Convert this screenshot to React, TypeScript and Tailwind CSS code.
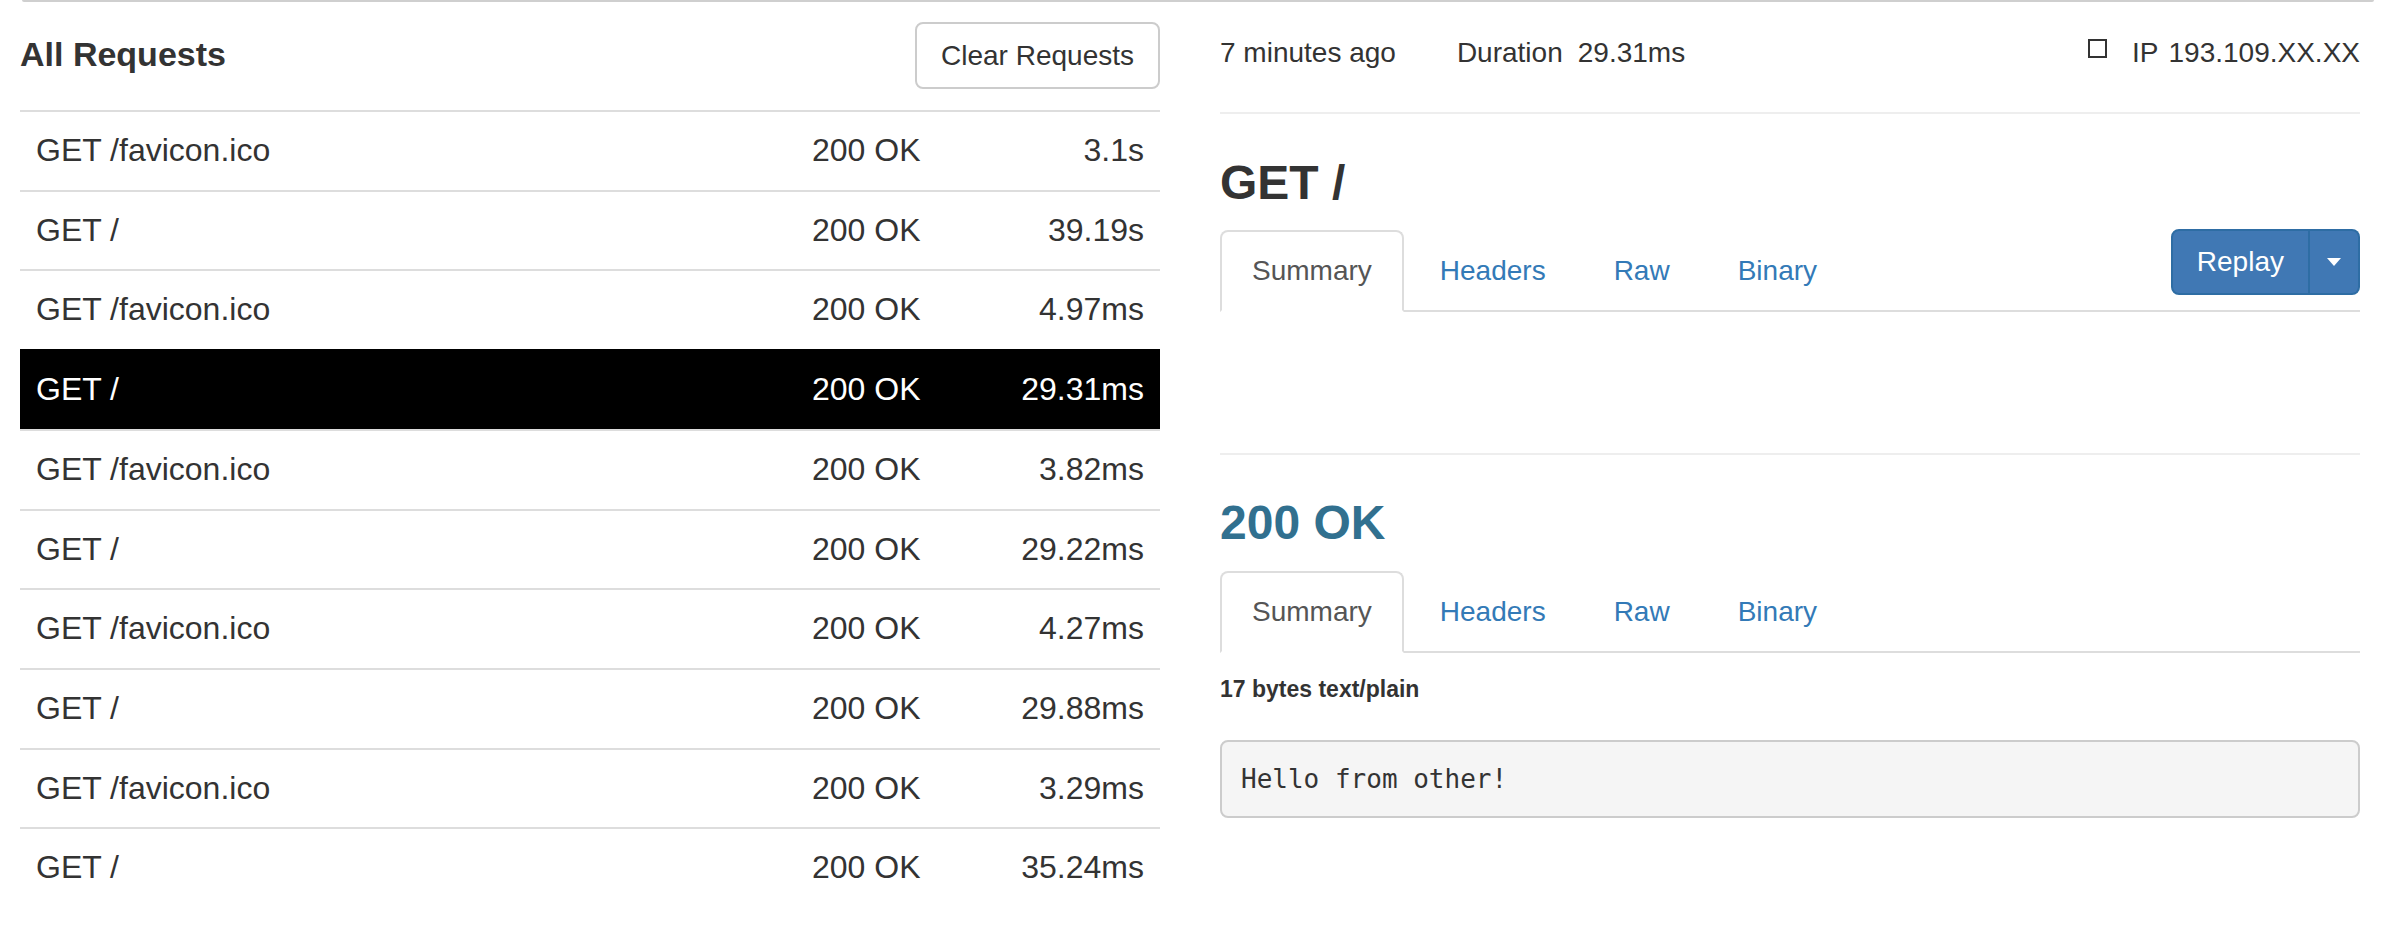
const requests = [
  { path: "GET /favicon.ico", status: "200 OK", time: "3.1s" },
  { path: "GET /", status: "200 OK", time: "39.19s" },
  { path: "GET /favicon.ico", status: "200 OK", time: "4.97ms" },
  { path: "GET /", status: "200 OK", time: "29.31ms", active: true },
  { path: "GET /favicon.ico", status: "200 OK", time: "3.82ms" },
  { path: "GET /", status: "200 OK", time: "29.22ms" },
  { path: "GET /favicon.ico", status: "200 OK", time: "4.27ms" },
  { path: "GET /", status: "200 OK", time: "29.88ms" },
  { path: "GET /favicon.ico", status: "200 OK", time: "3.29ms" },
  { path: "GET /", status: "200 OK", time: "35.24ms" },
];

const Tabs = ({ children }: { children?: React.ReactNode }) => {
  return (
    <div className="flex items-start border-b-2 border-[#ddd]">
      <div className="mr-[4px] -mb-[2px] px-[30px] py-[19px] leading-[40px] text-[28px] text-[#555] bg-white border-2 border-[#ddd] border-b-white rounded-t-[8px]">
        Summary
      </div>
      {["Headers", "Raw", "Binary"].map((t) => (
        <div
          key={t}
          className="mr-[4px] -mb-[2px] px-[30px] py-[19px] leading-[40px] text-[28px] text-[#337ab7] border-2 border-transparent"
        >
          {t}
        </div>
      ))}
      {children}
    </div>
  );
};

const App = () => {
  return (
    <div className="w-full bg-white text-[#333] font-['Liberation_Sans',Arial,sans-serif]">
      <div className="mx-[22px] h-[2px] bg-[#cfcfcf] rounded-b-[4px]" />

      <div className="flex gap-[60px] pl-[20px]">
        {/* request list */}
        <div className="w-[1140px]">
          <div className="flex items-start justify-between h-[108px]">
            <h3 className="pt-[32px] text-[34px] leading-[40px] font-bold">All Requests</h3>
            <button className="mt-[20px] h-[67px] px-[24px] text-[28px] text-[#333] bg-white border-2 border-[#ccc] rounded-[8px]">
              Clear Requests
            </button>
          </div>

          <div>
            {requests.map((r, i) => (
              <div
                key={i}
                className={
                  r.active
                    ? "flex border-t-2 border-black bg-black text-white text-[32px] leading-[45.7px]"
                    : "flex border-t-2 border-[#ddd] text-[32px] leading-[45.7px]"
                }
              >
                <div className="flex-1 px-[16px] py-[16px]">{r.path}</div>
                <div className="w-[170px] px-[16px] py-[16px]">{r.status}</div>
                <div className="w-[194px] px-[16px] py-[16px] text-right">{r.time}</div>
              </div>
            ))}
          </div>
        </div>

        {/* request detail */}
        <div className="w-[1140px]">
          <div className="flex items-start h-[112px] pt-[31px] border-b-2 border-[#eee] text-[28px] leading-[40px]">
            <span>7 minutes ago</span>
            <span className="ml-[61px]">Duration</span>
            <span className="ml-[15px]">29.31ms</span>
            <span className="ml-auto mt-[6px] mr-[25px] w-[19px] h-[19px] border-[2.5px] border-[#333]" />
            <span>IP</span>
            <span className="ml-[10px]">193.109.XX.XX</span>
          </div>

          <h1 className="mt-[42px] text-[48px] leading-[53px] font-bold">GET /</h1>

          <div className="mt-[21px]">
            <Tabs>
              <div className="ml-auto -mt-[1px] flex h-[66px] text-white text-[28px]">
                <button className="px-[24px] bg-[#4078b4] border-2 border-[#2e6da4] rounded-l-[8px]">
                  Replay
                </button>
                <button className="w-[50px] flex items-center justify-center bg-[#4078b4] border-2 border-l-0 border-[#2e6da4] rounded-r-[8px]">
                  <span className="w-0 h-0 border-x-[7px] border-x-transparent border-t-[8px] border-t-white" />
                </button>
              </div>
            </Tabs>
          </div>

          <div className="mt-[141px] border-t-2 border-[#eee]" />

          <h1 className="mt-[41px] text-[48px] leading-[53px] font-bold text-[#31708f]">200 OK</h1>

          <div className="mt-[22px]">
            <Tabs />
          </div>

          <div className="mt-[21px] text-[23px] leading-[30px] font-bold">17 bytes text/plain</div>

          <pre className="mt-[36px] px-[19px] py-[18px] text-[26px] leading-[38px] text-[#333] bg-[#f5f5f5] border-2 border-[#ccc] rounded-[8px] font-['DejaVu_Sans_Mono',monospace]">
            Hello from other!
          </pre>
        </div>
      </div>
    </div>
  );
};

export default App;
